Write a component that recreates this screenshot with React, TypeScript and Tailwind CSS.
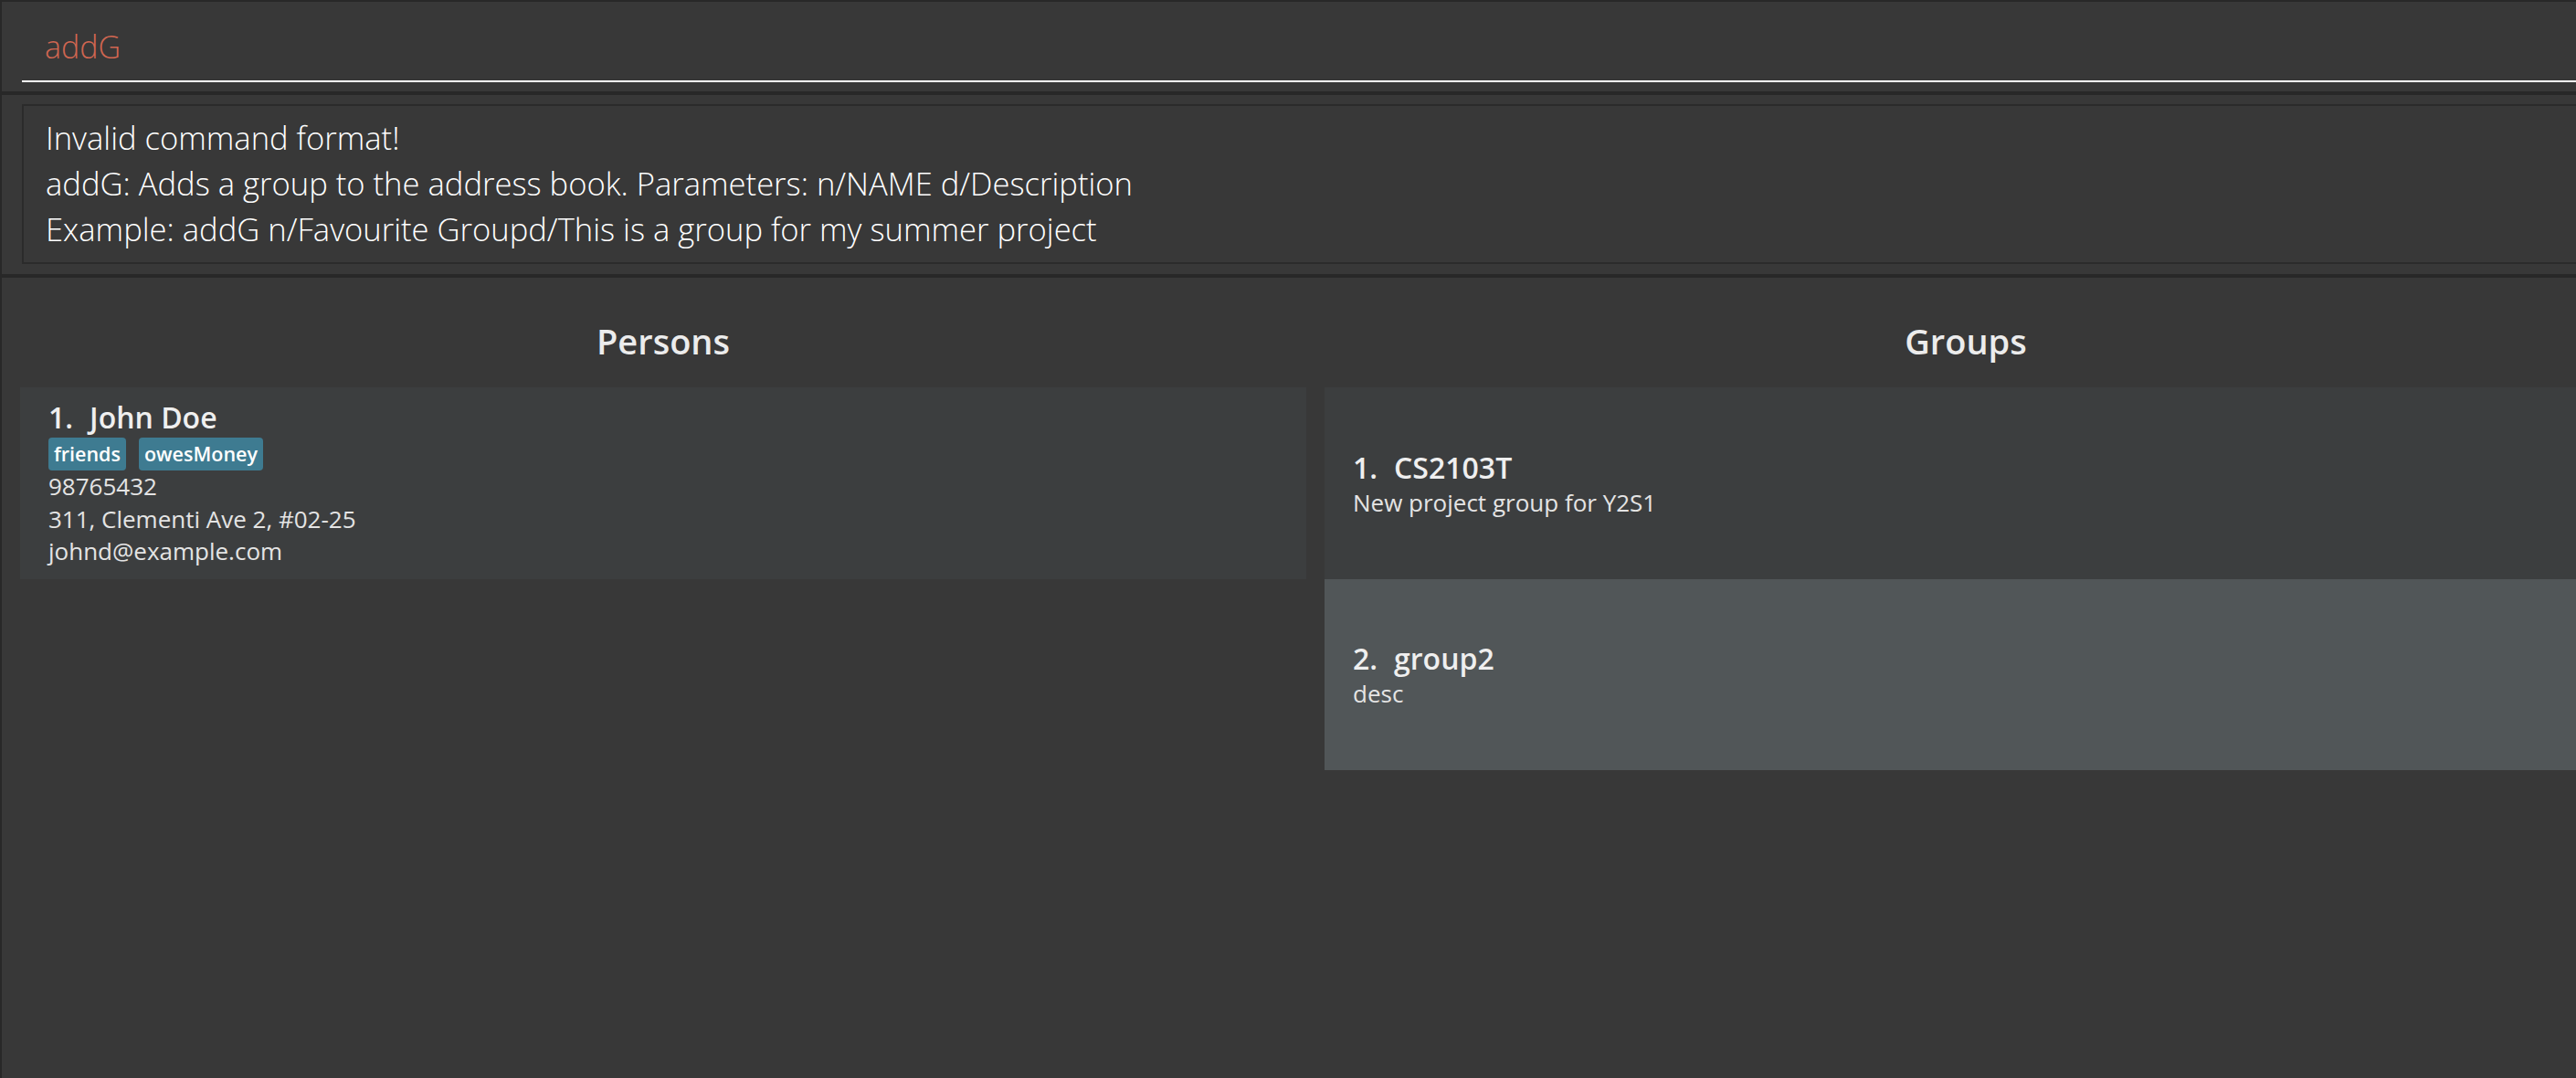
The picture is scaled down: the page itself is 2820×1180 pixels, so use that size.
const persons = [
  {
    name: "John Doe",
    tags: ["friends", "owesMoney"],
    phone: "98765432",
    address: "311, Clementi Ave 2, #02-25",
    email: "johnd@example.com",
  },
];

const groups = [
  { name: "CS2103T", description: "New project group for Y2S1" },
  { name: "group2", description: "desc" },
];

function PersonCard({ index, person }: { index: number; person: (typeof persons)[number] }) {
  return (
    <div className="bg-[#3c3e3f] pl-[31px] pt-[12px] pb-[12px]">
      <div className="flex gap-[18px] text-[32px] leading-[41px] font-semibold text-[#efefef]">
        <span>{index}.</span>
        <span>{person.name}</span>
      </div>
      <div className="mt-[2px] flex gap-[14px]">
        {person.tags.map((tag) => (
          <span
            key={tag}
            className="h-[36px] flex items-center px-[6px] rounded-[4px] bg-[#3e7b91] text-[21.5px] font-semibold text-white"
          >
            {tag}
          </span>
        ))}
      </div>
      <div className="text-[26px] leading-[35.5px] text-[#e4e4e4]">
        <div>{person.phone}</div>
        <div>{person.address}</div>
        <div>{person.email}</div>
      </div>
    </div>
  );
}

function GroupCard({ index, group }: { index: number; group: (typeof groups)[number] }) {
  const odd = index % 2 === 0;
  return (
    <div
      className={
        "h-[209.5px] pl-[31px] flex flex-col justify-center " + (odd ? "bg-[#515658]" : "bg-[#3c3e3f]")
      }
    >
      <div className="flex gap-[18px] text-[32px] leading-[43px] font-semibold text-[#efefef]">
        <span>{index}.</span>
        <span>{group.name}</span>
      </div>
      <div className="text-[26px] leading-[35.5px] text-[#e4e4e4]">{group.description}</div>
    </div>
  );
}

export default function App() {
  return (
    <div
      className="w-[2820px] h-[1180px] overflow-hidden bg-[#383838]"
      style={{ fontFamily: '"Open Sans", "Noto Sans", sans-serif' }}
    >
      <div className="w-[2880px] h-full flex flex-col border-l-2 border-t-2 border-[#282828]">
        {/* command box */}
        <div className="h-[98px] pl-[22px]">
          <div className="pt-[26px] pb-[14px] pl-[25px] border-b-2 border-white text-[34px] leading-[46px] font-light text-[#d06651]">
            addG
          </div>
        </div>
        <div className="h-[4px] bg-[#282828]" />

        {/* result display */}
        <div className="h-[196px] pl-[22px] pt-[10px]">
          <div className="h-[175px] border-2 border-[#2b2b2b] pl-[24px] pt-[10px] text-[34.6px] leading-[50px] font-light text-white">
            <div>Invalid command format!</div>
            <div>addG: Adds a group to the address book. Parameters: n/NAME d/Description</div>
            <div>Example: addG n/Favourite Groupd/This is a group for my summer project</div>
          </div>
        </div>
        <div className="h-[4px] bg-[#282828]" />

        {/* lists */}
        <div className="flex-1 flex">
          <div className="w-[1438px] pl-[20px] pr-[10px] pt-[43px] flex flex-col">
            <div className="text-center text-[38px] leading-[52px] font-semibold text-[#ececec] mb-[25px]">
              Persons
            </div>
            {persons.map((p, i) => (
              <PersonCard key={p.email} index={i + 1} person={p} />
            ))}
          </div>
          <div className="w-[1424px] pl-[10px] pr-[10px] pt-[43px] flex flex-col">
            <div className="text-center text-[38px] leading-[52px] font-semibold text-[#ececec] mb-[25px]">
              Groups
            </div>
            {groups.map((g, i) => (
              <GroupCard key={g.name} index={i + 1} group={g} />
            ))}
          </div>
        </div>
      </div>
    </div>
  );
}
